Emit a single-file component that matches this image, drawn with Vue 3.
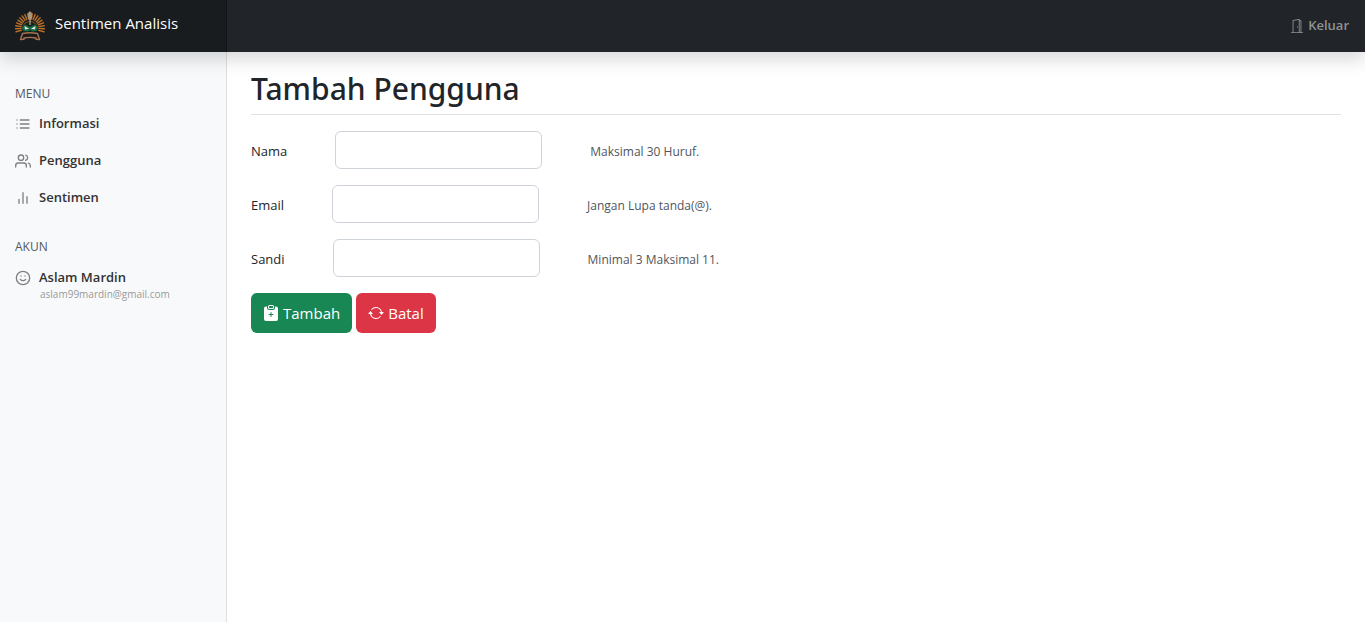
<script setup>
import { ref } from 'vue'

const menu = [
  { label: 'Informasi', icon: 'list' },
  { label: 'Pengguna', icon: 'users' },
  { label: 'Sentimen', icon: 'chart' },
]

const fields = ref([
  { id: 'nama', label: 'Nama', type: 'text', hint: 'Maksimal 30 Huruf.', value: '' },
  { id: 'email', label: 'Email', type: 'email', hint: 'Jangan Lupa tanda(@).', value: '' },
  { id: 'sandi', label: 'Sandi', type: 'password', hint: 'Minimal 3 Maksimal 11.', value: '' },
])

const rays = [-105, -93, -81, -69, -57, -45, -33, -21, -9, 9, 21, 33, 45, 57, 69, 81, 93, 105]
</script>

<template>
  <div class="page">
    <header class="topbar">
      <a class="brand" href="#">
        <svg class="logo" viewBox="0 0 30 30" aria-hidden="true">
          <g stroke="#b8702a" stroke-width="1.4" stroke-linecap="round">
            <line v-for="a in rays" :key="a" x1="15" y1="8" x2="15" y2="2.6" :transform="`rotate(${a} 15 17)`" />
          </g>
          <path d="M7.5 18a7.500 7.500 0 0 1 15 0" fill="none" stroke="#7a4a24" stroke-width="1.2" />
          <path d="M7.500 15q7.500-7 15 0l-.5 5-4 2.500h-6l-4-2.500z" fill="#11231c" />
          <path d="M7 16.500l3-3 5 2.500 5-2.500 3 3-1.500 3.500-4.500.5-2-1.500-2 1.500-4.500-.5z" fill="#176b45" />
          <path d="M9.500 15l4.500 2.800-4 .7zM20.500 15l-4.500 2.800 4 .7z" fill="#dfe9e3" />
          <path d="M13.200 2q1.800-2.800 3.600 0l.2 4-1.300 3v5h-1.400V9L13 6z" fill="#a89a80" />
          <path d="M7.500 22.500q7.500-1.500 15 0l2 6-3.500-.2v-1.300q-6-1.200-12 0v1.300l-3.500.2z" fill="#1b1b1a" stroke="#a87252" stroke-width="1.400" stroke-linejoin="round" />
        </svg>
        <span>Sentimen Analisis</span>
      </a>
      <a class="logout" href="#">
        <svg class="glyph" viewBox="0 0 16 16" fill="currentColor" aria-hidden="true">
          <path d="M8.500 10c-.276 0-.5-.448-.5-1s.224-1 .5-1 .5.448.5 1-.224 1-.5 1z" />
          <path d="M10.828.122A.5.5 0 0 1 11 .5V1h.5A1.500 1.500 0 0 1 13 2.500V15h1.500a.5.5 0 0 1 0 1h-13a.5.5 0 0 1 0-1H3V1.500a.5.5 0 0 1 .43-.495l7-1a.5.5 0 0 1 .398.117zM11.500 2H11v13h1V2.500a.5.5 0 0 0-.5-.5zM4 1.934V15h6V1.077l-6 .857z" />
        </svg>
        <span>Keluar</span>
      </a>
    </header>

    <div class="body">
      <nav class="sidebar">
        <h2 class="section">MENU</h2>
        <ul class="menu">
          <li v-for="item in menu" :key="item.label">
            <a class="item" href="#">
              <svg class="feather" viewBox="0 0 24 24" aria-hidden="true">
                <path v-if="item.icon === 'list'" d="M8 6h13M8 12h13M8 18h13M3 6h.01M3 12h.01M3 18h.01" />
                <template v-else-if="item.icon === 'users'">
                  <path d="M17 21v-2a4 4 0 0 0-4-4H5a4 4 0 0 0-4 4v2" />
                  <circle cx="9" cy="7" r="4" />
                  <path d="M23 21v-2a4 4 0 0 0-3-3.870M16 3.130a4 4 0 0 1 0 7.750" />
                </template>
                <path v-else d="M18 20V10M12 20V4M6 20v-6" />
              </svg>
              <span>{{ item.label }}</span>
            </a>
          </li>
        </ul>
        <h2 class="section account">AKUN</h2>
        <a class="item" href="#">
          <svg class="feather" viewBox="0 0 24 24" aria-hidden="true">
            <circle cx="12" cy="12" r="10" />
            <path d="M8 14s1.500 2 4 2 4-2 4-2M9 9h.01M15 9h.01" />
          </svg>
          <span>Aslam Mardin</span>
        </a>
        <p class="mail">aslam99mardin@gmail.com</p>
      </nav>

      <main class="content">
        <h1>Tambah Pengguna</h1>
        <form @submit.prevent>
          <div v-for="f in fields" :key="f.id" class="row">
            <label :for="f.id">{{ f.label }}</label>
            <input :id="f.id" v-model="f.value" :type="f.type" :aria-describedby="f.id + '-hint'" />
            <span :id="f.id + '-hint'" class="hint">{{ f.hint }}</span>
          </div>
          <div class="actions">
            <button class="btn save" type="submit">
              <svg class="glyph" viewBox="0 0 16 16" fill="currentColor" aria-hidden="true">
                <path d="M6.500 0A1.500 1.500 0 0 0 5 1.500v1A1.500 1.500 0 0 0 6.500 4h3A1.500 1.500 0 0 0 11 2.500v-1A1.500 1.500 0 0 0 9.500 0h-3Zm3 1a.5.5 0 0 1 .5.5v1a.5.5 0 0 1-.5.5h-3a.5.5 0 0 1-.5-.5v-1a.5.5 0 0 1 .5-.5h3Z" />
                <path d="M4 1.500H3a2 2 0 0 0-2 2V14a2 2 0 0 0 2 2h10a2 2 0 0 0 2-2V3.500a2 2 0 0 0-2-2h-1v1A2.500 2.500 0 0 1 9.500 5h-3A2.500 2.500 0 0 1 4 2.500v-1Zm4.500 6V9H10a.5.5 0 0 1 0 1H8.500v1.500a.5.5 0 0 1-1 0V10H6a.5.5 0 0 1 0-1h1.500V7.500a.5.5 0 0 1 1 0Z" />
              </svg>
              <span>Tambah</span>
            </button>
            <button class="btn cancel" type="button">
              <svg class="glyph" viewBox="0 0 16 16" fill="currentColor" aria-hidden="true">
                <path d="M11.534 7h3.932a.25.25 0 0 1 .192.41l-1.966 2.360a.25.25 0 0 1-.384 0l-1.966-2.360a.25.25 0 0 1 .192-.41zm-11 2h3.932a.25.25 0 0 0 .192-.41L2.692 6.230a.25.25 0 0 0-.384 0L.342 8.590A.25.25 0 0 0 .534 9z" />
                <path d="M8 3c-1.552 0-2.940.707-3.857 1.818a.5.5 0 1 1-.771-.636A6.002 6.002 0 0 1 13.917 7H12.900A5.002 5.002 0 0 0 8 3zM3.100 9a5.002 5.002 0 0 0 8.757 2.182.5.5 0 1 1 .771.636A6.002 6.002 0 0 1 2.083 9H3.100z" />
              </svg>
              <span>Batal</span>
            </button>
          </div>
        </form>
      </main>
    </div>
  </div>
</template>

<style>
body {
  margin: 0;
  background: #fff;
}
</style>

<style scoped>
.page {
  display: flex;
  flex-direction: column;
  min-height: 100vh;
  color: #212529;
  font-family: "Segoe UI", "Open Sans", "Noto Sans", sans-serif;
  font-size: 14px;
  line-height: 21px;
}
.page * {
  box-sizing: border-box;
}
a {
  color: inherit;
  text-decoration: none;
}
.topbar {
  position: relative;
  z-index: 1;
  display: flex;
  justify-content: space-between;
  height: 52px;
  background: #212529;
  box-shadow: 0 8px 16px rgba(0, 0, 0, 0.15);
}
.brand {
  display: flex;
  align-items: center;
  gap: 10px;
  width: 227px;
  padding: 0 15px 6px;
  background: #191c1f;
  box-shadow: inset -1px 0 0 #121416;
  color: #fff;
  font-size: 15px;
}
.logo {
  width: 30px;
  height: 30px;
  margin-top: 6px;
}
.logout {
  display: flex;
  align-items: center;
  gap: 4px;
  padding: 0 16px 2px;
  color: #909294;
  font-size: 13px;
  font-weight: 600;
}
.glyph {
  flex: none;
  width: 16px;
  height: 16px;
}
.logout .glyph {
  width: 14px;
  height: 14px;
  margin-top: 2px;
}
.body {
  display: flex;
  flex: 1;
}
.sidebar {
  flex: none;
  width: 227px;
  padding-top: 32px;
  background: #f8f9fb;
  box-shadow: inset -1px 0 0 rgba(0, 0, 0, 0.1);
}
.section {
  margin: 0;
  padding: 0 15px;
  color: #53585e;
  font-size: 12px;
  font-weight: 400;
  line-height: 20px;
}
.account {
  margin: 21px 0 2px;
}
.menu {
  margin: 0;
  padding: 1px 0 0;
  list-style: none;
}
.item {
  display: flex;
  align-items: center;
  gap: 8px;
  height: 37px;
  padding: 0 15px;
  color: #333;
  font-size: 13px;
  font-weight: 600;
}
.feather {
  flex: none;
  width: 16px;
  height: 16px;
  fill: none;
  stroke: #808080;
  stroke-width: 2;
  stroke-linecap: round;
  stroke-linejoin: round;
}
.mail {
  margin: -8px 0 0;
  padding-left: 40px;
  color: #999;
  font-size: 10px;
  line-height: 12px;
}
.content {
  flex: 1;
  min-width: 0;
  padding: 16px 24px;
}
h1 {
  margin: 0 0 16px;
  padding: 2px 0 6px;
  border-bottom: 1px solid #dee2e6;
  font-family: "Segoe UI", "Noto Sans", "Open Sans", sans-serif;
  font-size: 30px;
  font-weight: 500;
  line-height: 38px;
}
.row {
  display: flex;
  align-items: center;
  gap: 48px;
  margin-bottom: 16px;
}
.row label {
  padding-top: 2px;
  font-size: 13px;
}
.row input {
  width: 207px;
  height: 38px;
  padding: 6px 12px;
  border: 1px solid #ced4da;
  border-radius: 6px;
  background: #fff;
  color: inherit;
  font: inherit;
}
.hint {
  padding-top: 2px;
  color: #50565c;
  font-size: 12px;
}
.actions {
  display: flex;
  gap: 4px;
}
.btn {
  display: flex;
  align-items: center;
  gap: 4px;
  height: 40px;
  padding: 0 12px;
  border: 0;
  border-radius: 6px;
  color: #fff;
  font-family: inherit;
  font-size: 15px;
  cursor: pointer;
}
.save {
  background: #198754;
}
.cancel {
  background: #dc3545;
}
</style>
